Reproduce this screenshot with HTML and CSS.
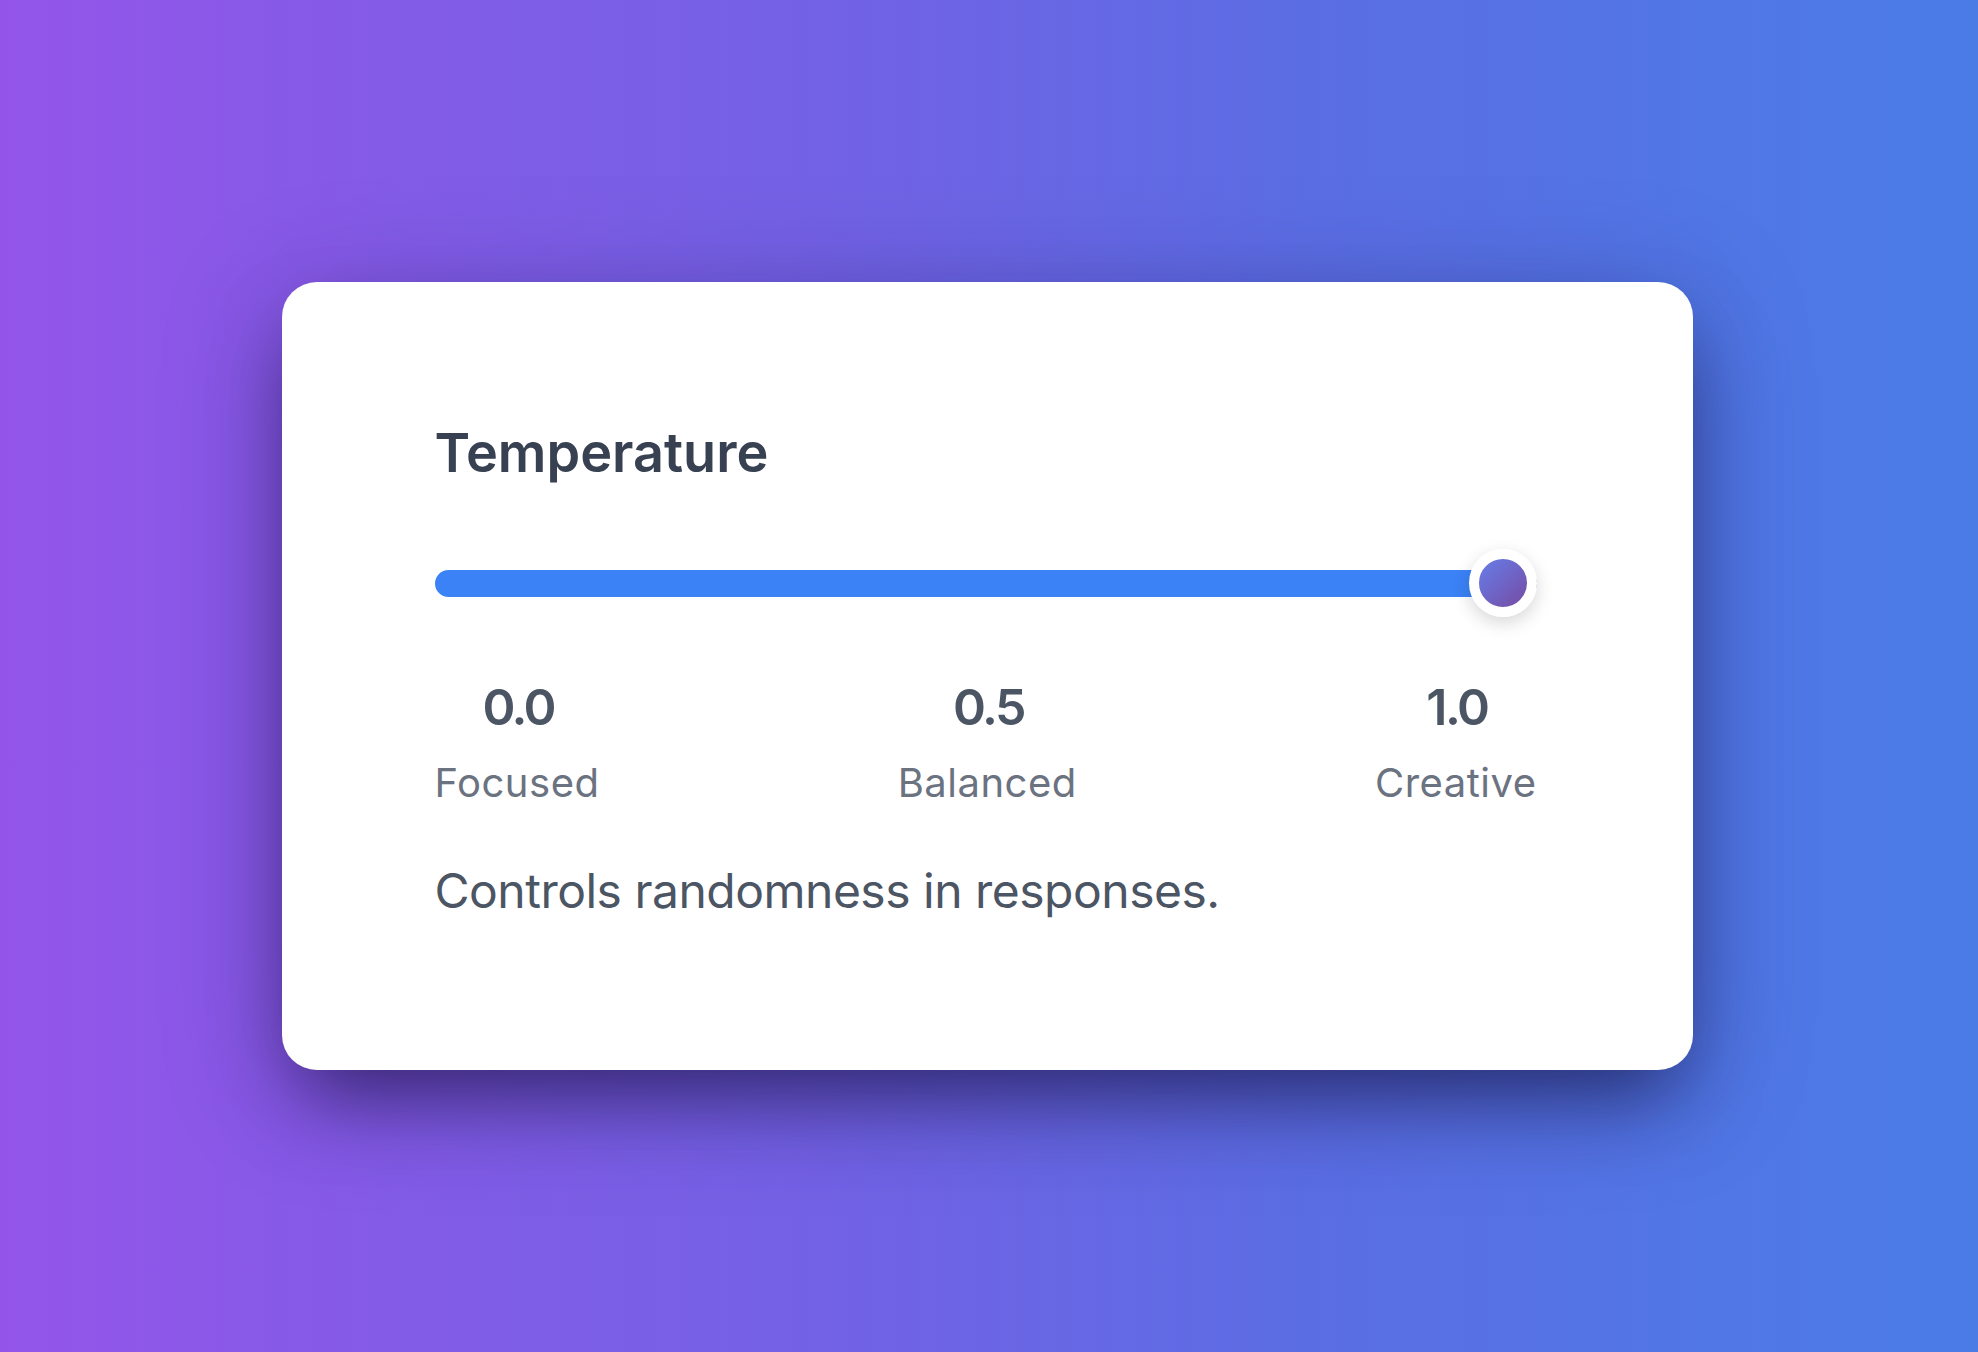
FILE: index.html
```html
<!DOCTYPE html>
<html lang="en">
<head>
<meta charset="utf-8">
<title>Temperature</title>
<link rel="stylesheet" href="styles.css">
</head>
<body>
  <main class="stage">
    <section class="card">
      <h2 class="title">Temperature</h2>
      <div class="slider">
        <div class="track"></div>
        <div class="thumb"></div>
      </div>
      <div class="scale">
        <div class="stop">
          <div class="value">0.0</div>
          <div class="label">Focused</div>
        </div>
        <div class="stop">
          <div class="value">0.5</div>
          <div class="label">Balanced</div>
        </div>
        <div class="stop">
          <div class="value">1.0</div>
          <div class="label">Creative</div>
        </div>
      </div>
      <p class="desc">Controls randomness in responses.</p>
    </section>
  </main>
</body>
</html>
```
FILE: styles.css
```css
* { box-sizing: border-box; }

html, body {
  margin: 0;
  padding: 0;
}

body {
  font-family: Inter, "Noto Sans", "Liberation Sans", sans-serif;
  background: linear-gradient(90deg, #9355e9 0%, #7063e5 45%, #5c6de4 65%, #4a7ce6 100%);
  min-height: 100vh;
}

.stage {
  min-height: 100vh;
  display: flex;
  align-items: center;
  justify-content: center;
  padding-right: 4px;
}

.card {
  width: 1411px;
  background: #ffffff;
  border-radius: 35px;
  padding: 138px 156px 150px 153px;
  box-shadow: 0 40px 80px -18px rgba(10, 5, 40, 0.55), 0 20px 120px rgba(30, 20, 80, 0.28);
}

.title {
  margin: 0;
  font-size: 54px;
  line-height: 65px;
  font-weight: 600;
  color: #374151;
  letter-spacing: 0;
}

.slider {
  position: relative;
  height: 68px;
  margin-top: 64px;
  display: flex;
  align-items: center;
}

.track {
  width: 100%;
  height: 27px;
  border-radius: 14px;
  background: #3b82f6;
}

.thumb {
  position: absolute;
  right: 0;
  top: 0;
  width: 68px;
  height: 68px;
  border-radius: 50%;
  border: 10px solid #ffffff;
  background: linear-gradient(135deg, #667eea 0%, #764ba2 100%);
  box-shadow: 0 6px 18px rgba(0, 0, 0, 0.16);
}

.scale {
  margin-top: 60px;
  display: flex;
  justify-content: space-between;
}

.stop {
  display: flex;
  flex-direction: column;
  align-items: center;
  gap: 22px;
}

.value {
  font-size: 50px;
  line-height: 60px;
  font-weight: 600;
  color: #4b5563;
  letter-spacing: -2.5px;
  padding-left: 2.5px;
}

.label {
  font-size: 40px;
  line-height: 48px;
  font-weight: 400;
  color: #6b7280;
  letter-spacing: 0.5px;
}

.desc {
  margin: 55px 0 0 0;
  font-size: 48px;
  line-height: 58px;
  font-weight: 400;
  color: #4b5563;
  letter-spacing: -0.5px;
}
```
